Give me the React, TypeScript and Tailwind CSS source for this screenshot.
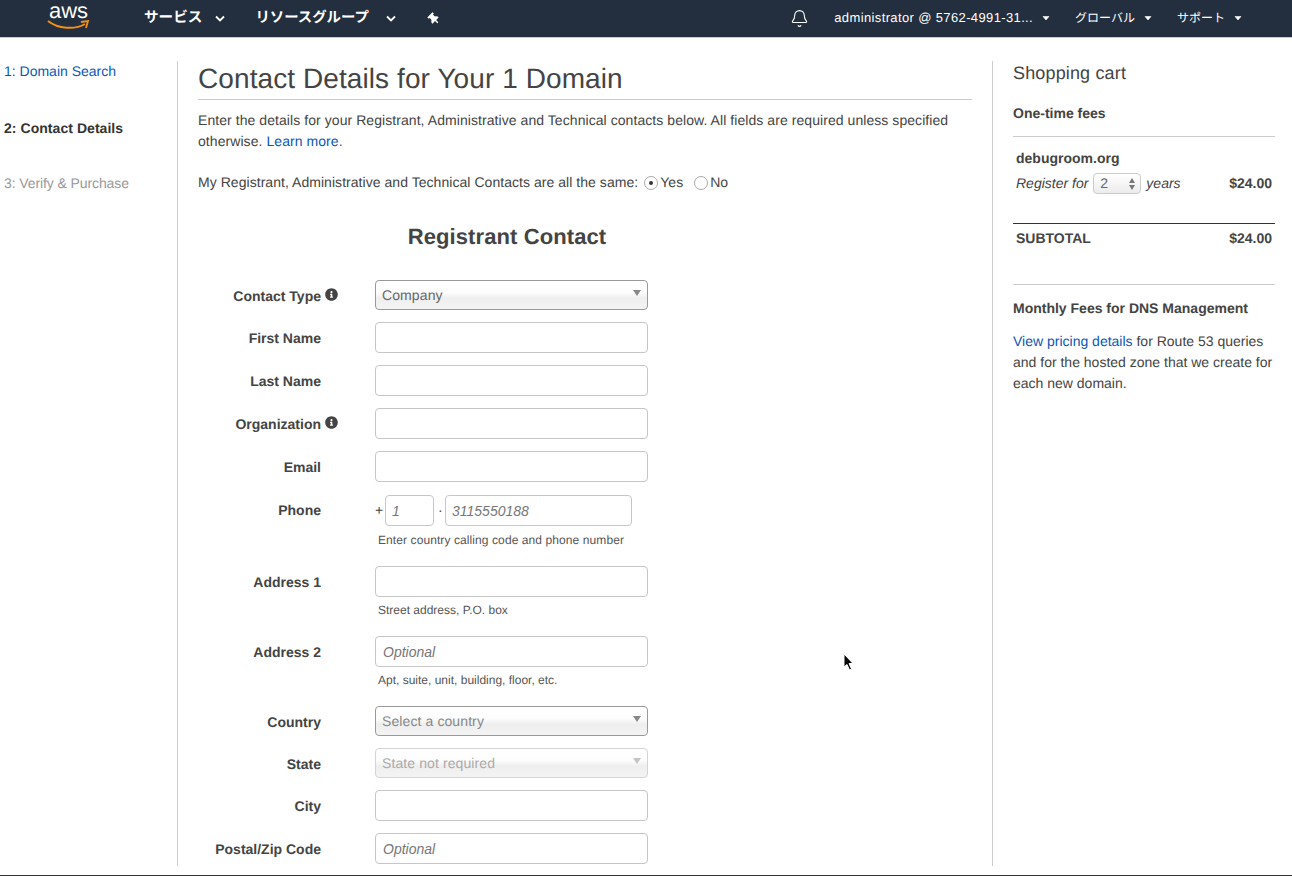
import React from "react";
import { FaInfoCircle, FaThumbtack } from "react-icons/fa";
import { Bell } from "lucide-react";

const Caret = ({ bold = false }: { bold?: boolean }) =>
  bold ? (
    <svg width="10" height="7" viewBox="0 0 10 7" className="shrink-0 block">
      <path d="M1 1.5 L5 5.5 L9 1.5" fill="none" stroke="#fff" strokeWidth="1.8" />
    </svg>
  ) : (
    <svg width="8" height="5" viewBox="0 0 8 5" className="shrink-0 block">
      <path d="M1 0.5 L4 4 L7 0.5 Z" fill="#fff" stroke="#fff" strokeWidth="0.6" />
    </svg>
  );

const Label = ({ text, info, flat }: { text: string; info?: boolean; flat?: boolean }) => (
  <div className={`w-[177px] shrink-0 flex justify-end items-center h-[31px] ${flat ? "" : "pt-[2px]"} text-[14px] font-bold text-[#444] relative`}>
    <span className="mr-[54px]">{text}</span>
    {info && <FaInfoCircle className="absolute right-[37px] top-[8px] text-[#444]" size={13} />}
  </div>
);

const inputCls =
  "block w-[273px] h-[31px] rounded-[4px] border border-[#c6c6c6] bg-white px-[7px] text-[14px] italic text-[#444] placeholder:text-[#777] outline-none";

const Field = ({ label, info, placeholder, help, mb }: { label: string; info?: boolean; placeholder?: string; help?: string; mb: string }) => (
  <div className={`flex ${mb}`}>
    <Label text={label} info={info} />
    <div>
      <input className={inputCls} placeholder={placeholder} />
      {help && <p className="mt-[5px] ml-[3px] text-[12px] leading-[16px] text-[#555]">{help}</p>}
    </div>
  </div>
);

const Select = ({ label, value, info, tone, mb }: { label: string; value: string; info?: boolean; tone: "dark" | "muted" | "off"; mb: string }) => {
  const box =
    tone === "off"
      ? "border-[#d4d4d4] text-[#aaa]"
      : tone === "muted"
      ? "border-[#999] text-[#888]"
      : "border-[#999] text-[#666]";
  const arrow = tone === "off" ? "#c4c4c4" : "#888";
  return (
    <div className={`flex ${mb}`}>
      <Label text={label} info={info} />
      <div
        className={`w-[273px] h-[30px] rounded-[4px] border ${box} flex items-center justify-between pl-[6px] pr-[5px] text-[14px] tracking-[0.1px] bg-[linear-gradient(#ffffff_0%,#fdfdfd_40%,#eeeeee_62%,#f4f4f4_100%)]`}
      >
        <span>{value}</span>
        <svg width="10" height="6" viewBox="0 0 10 6" className="mb-[4px]">
          <path d="M1 0 H9 L5 6 Z" fill={arrow} />
        </svg>
      </div>
    </div>
  );
};

const Radio = ({ on }: { on?: boolean }) => (
  <span className="flex items-center justify-center w-[14px] h-[14px] rounded-full border border-[#aaa] bg-white shrink-0">
    {on && <span className="w-[4px] h-[4px] rounded-full bg-[#333]" />}
  </span>
);

export default function App() {
  return (
    <div
      className="relative w-[1292px] h-[876px] overflow-hidden bg-white text-[#444] text-[14px] leading-[21px] flex flex-col [text-rendering:geometricPrecision]"
      style={{ fontFamily: '"Liberation Sans", "Noto Sans CJK JP", sans-serif' }}
    >
      <header className="h-[38px] shrink-0 bg-[#232f3e] border-b border-[#c8c8c8] flex items-center text-white">
        <div className="relative w-[144px] h-full shrink-0">
          <span className="absolute left-[49px] top-0 text-[22px] leading-[22px] text-white">aws</span>
          <svg className="absolute left-[47px] top-[19px]" width="43" height="12" viewBox="0 0 43 12">
            <path d="M1 2 C 11 10, 28 11, 38 5" fill="none" stroke="#f29111" strokeWidth="2" />
            <path d="M34 3 L41 2 L39 9" fill="none" stroke="#f29111" strokeWidth="1.8" />
          </svg>
        </div>
        <span className="text-[14.6px] font-bold">サービス</span>
        <span className="ml-[13px]"><Caret bold /></span>
        <span className="ml-[30px] text-[14.4px] font-bold">リソースグループ</span>
        <span className="ml-[17px]"><Caret bold /></span>
        <FaThumbtack className="ml-[32px] -rotate-45" size={12} />
        <div className="ml-auto flex items-center pr-[50px]">
          <Bell size={19} strokeWidth={1.4} className="mr-[25px]" />
          <span className="text-[13px] tracking-[0.37px] mb-[2px]">administrator @ 5762-4991-31...</span>
          <span className="ml-[9px]"><Caret /></span>
          <span className="ml-[25px] text-[12px]">グローバル</span>
          <span className="ml-[9px]"><Caret /></span>
          <span className="ml-[25px] text-[12px]">サポート</span>
          <span className="ml-[9px]"><Caret /></span>
        </div>
      </header>

      <div className="flex-1 min-h-0 flex pt-[23px] pb-[9px] border-b border-[#333]">
        <nav className="w-[178px] shrink-0 border-r border-[#ccc] pl-[4px]">
          <a className="block text-[#0b57b8]">1: Domain Search</a>
          <p className="mt-[36px] font-bold text-[#333] tracking-[0.05px]">2: Contact Details</p>
          <p className="mt-[34px] text-[#999] tracking-[-0.1px]">3: Verify &amp; Purchase</p>
        </nav>

        <main className="w-[815px] shrink-0 border-r border-[#ccc] pl-[20px] pr-[20px]">
          <h1 className="mt-[1px] text-[28px] leading-[34px] pb-[3px] border-b border-[#ccc] text-[#444] tracking-[0.09px]">Contact Details for Your 1 Domain</h1>
          <p className="mt-[10px] text-[#444] tracking-[0.065px]">
            Enter the details for your Registrant, Administrative and Technical contacts below. All fields are required unless specified otherwise.{" "}
            <a className="text-[#0b57b8]">Learn more.</a>
          </p>
          <div className="mt-[20px] flex items-center tracking-[0.045px]">
            <span>My Registrant, Administrative and Technical Contacts are all the same:</span>
            <span className="ml-[6px]"><Radio on /></span>
            <span className="ml-[2px]">Yes</span>
            <span className="ml-[11px]"><Radio /></span>
            <span className="ml-[2px]">No</span>
          </div>
          <h2 className="mt-[31px] w-[618px] text-center text-[22px] leading-[26px] font-bold text-[#444] tracking-[0.1px]">Registrant Contact</h2>

          <div className="mt-[30px]">
            <Select label="Contact Type" info value="Company" tone="dark" mb="mb-[11px]" />
            <Field label="First Name" mb="mb-[12px]" />
            <Field label="Last Name" mb="mb-[12px]" />
            <Field label="Organization" info mb="mb-[12px]" />
            <Field label="Email" mb="mb-[13px]" />
            <div className="flex mb-[18px]">
              <Label text="Phone" flat />
              <div>
                <div className="flex items-center">
                  <span className="w-[10px]">+</span>
                  <input className="block w-[49px] h-[31px] rounded-[4px] border border-[#c6c6c6] px-[6px] text-[14px] italic placeholder:text-[#777] outline-none" placeholder="1" />
                  <span className="w-[11px] pl-[4px]">·</span>
                  <input className="block w-[187px] h-[31px] rounded-[4px] border border-[#c6c6c6] px-[6px] text-[14px] italic placeholder:text-[#777] outline-none" placeholder="3115550188" />
                </div>
                <p className="mt-[6px] ml-[3px] text-[12px] leading-[16px] text-[#555] tracking-[0.09px]">Enter country calling code and phone number</p>
              </div>
            </div>
            <Field label="Address 1" help="Street address, P.O. box" mb="mb-[18px]" />
            <Field label="Address 2" placeholder="Optional" help="Apt, suite, unit, building, floor, etc." mb="mb-[18px]" />
            <Select label="Country" value="Select a country" tone="muted" mb="mb-[11px]" />
            <Select label="State" value="State not required" tone="off" mb="mb-[11px]" />
            <Field label="City" mb="mb-[12px]" />
            <Field label="Postal/Zip Code" placeholder="Optional" mb="mb-0" />
          </div>
        </main>

        <aside className="w-[299px] shrink-0 pl-[20px] pr-[17px]">
          <h3 className="text-[18px] leading-[24px] text-[#444] tracking-[0.15px]">Shopping cart</h3>
          <p className="mt-[18px] font-bold text-[#444] pb-[12px] border-b border-[#ccc]">One-time fees</p>
          <div className="px-[3px]">
            <p className="mt-[11px] font-bold">debugroom.org</p>
            <div className="flex items-center mt-[3px] italic h-[23px]">
              <span>Register for</span>
              <span className="ml-[5px] mr-[5px] not-italic w-[48px] h-[21px] rounded-[4px] border border-[#ccc] bg-[linear-gradient(#fff,#ececec)] flex items-center justify-between pl-[6px] pr-[4px] text-[#666]">
                2
                <svg width="8" height="14" viewBox="0 0 8 14"><path d="M4 1 L7 6 H1 Z M4 13 L7 8 H1 Z" fill="#777" /></svg>
              </span>
              <span>years</span>
              <span className="ml-auto not-italic font-bold">$24.00</span>
            </div>
          </div>
          <div className="mt-[28px] border-t border-[#333] px-[3px] pt-[4px] pb-[35px] flex justify-between font-bold">
            <span>SUBTOTAL</span>
            <span>$24.00</span>
          </div>
          <div className="border-t border-[#ccc] pt-[13px]">
            <p className="font-bold">Monthly Fees for DNS Management</p>
            <p className="mt-[12px]">
              <a className="text-[#0b57b8]">View pricing details</a> for Route 53 queries and for the hosted zone that we create for each new domain.
            </p>
          </div>
        </aside>
      </div>

      <svg className="absolute left-[842px] top-[653px]" width="14" height="19" viewBox="0 0 14 19">
        <path d="M2 1 V14 L5 11.5 L7.5 17 L9.5 16 L7 10.5 H11 Z" fill="#000" stroke="#fff" strokeWidth="1" />
      </svg>
    </div>
  );
}
